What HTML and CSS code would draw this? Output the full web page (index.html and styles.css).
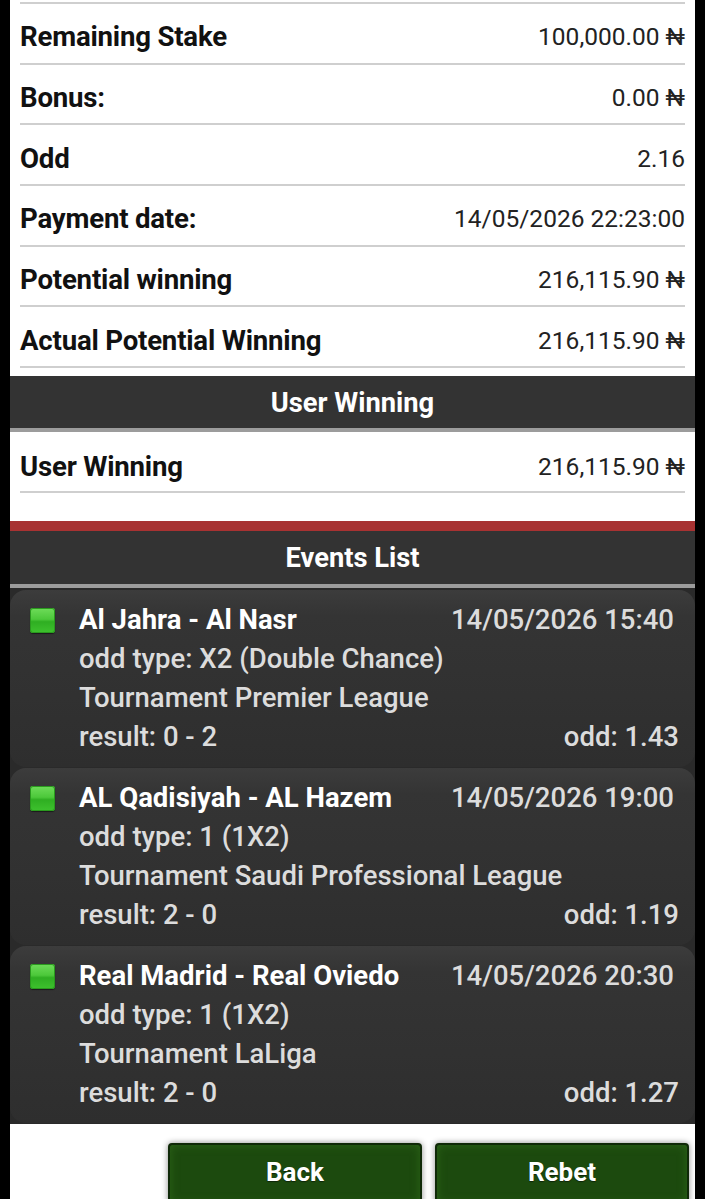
FILE: index.html
```html
<!DOCTYPE html>
<html lang="en">
<head>
<meta charset="utf-8">
<title>Bet details</title>
<link rel="stylesheet" href="styles.css">
</head>
<body>
<div class="page">
  <div class="summary">
    <div class="row"><span class="label">Remaining Stake</span><span class="value">100,000.00 ₦</span></div>
    <div class="row"><span class="label">Bonus:</span><span class="value">0.00 ₦</span></div>
    <div class="row"><span class="label">Odd</span><span class="value">2.16</span></div>
    <div class="row"><span class="label">Payment date:</span><span class="value">14/05/2026 22:23:00</span></div>
    <div class="row"><span class="label">Potential winning</span><span class="value">216,115.90 ₦</span></div>
    <div class="row"><span class="label">Actual Potential Winning</span><span class="value">216,115.90 ₦</span></div>
  </div>
  <div class="section-head">User Winning</div>
  <div class="summary winning">
    <div class="row"><span class="label">User Winning</span><span class="value">216,115.90 ₦</span></div>
  </div>
  <div class="section-head events-head">Events List</div>
  <div class="events">
    <div class="event">
      <span class="status"></span>
      <div class="event-body">
        <div class="line title"><span>Al Jahra - Al Nasr</span><span class="date">14/05/2026 15:40</span></div>
        <div class="line">odd type: X2 (Double Chance)</div>
        <div class="line">Tournament Premier League</div>
        <div class="line split"><span>result: 0 - 2</span><span>odd: 1.43</span></div>
      </div>
    </div>
    <div class="event">
      <span class="status"></span>
      <div class="event-body">
        <div class="line title"><span>AL Qadisiyah - AL Hazem</span><span class="date">14/05/2026 19:00</span></div>
        <div class="line">odd type: 1 (1X2)</div>
        <div class="line">Tournament Saudi Professional League</div>
        <div class="line split"><span>result: 2 - 0</span><span>odd: 1.19</span></div>
      </div>
    </div>
    <div class="event">
      <span class="status"></span>
      <div class="event-body">
        <div class="line title"><span>Real Madrid - Real Oviedo</span><span class="date">14/05/2026 20:30</span></div>
        <div class="line">odd type: 1 (1X2)</div>
        <div class="line">Tournament LaLiga</div>
        <div class="line split"><span>result: 2 - 0</span><span>odd: 1.27</span></div>
      </div>
    </div>
  </div>
  <div class="actions">
    <button class="btn">Back</button>
    <button class="btn">Rebet</button>
  </div>
</div>
</body>
</html>
```

FILE: styles.css
```css
* { box-sizing: border-box; }

html, body {
  margin: 0;
  padding: 0;
  background: #000;
  height: 100%;
  overflow: hidden;
}

body {
  font-family: Roboto, "Noto Sans", "DejaVu Sans", sans-serif;
}

.page {
  margin: 0 10px;
  background: #fff;
  min-height: 100%;
}

.summary {
  padding: 2px 10px 8px;
}

.summary .row {
  display: flex;
  justify-content: space-between;
  align-items: center;
  height: 60.7px;
  padding-top: 7px;
  border-bottom: 2px solid #cfcfcf;
}

.summary .row:first-child {
  border-top: 2px solid #cfcfcf;
  height: 62.7px;
}

.label {
  font-size: 27.6px;
  font-weight: 700;
  color: #111;
  letter-spacing: -0.2px;
}

.value {
  font-size: 24.5px;
  font-weight: 400;
  color: #222;
}

.summary.winning {
  padding: 0 10px 28px;
}

.summary.winning .row:first-child {
  border-top: none;
  height: 61px;
  padding-top: 9px;
}

.section-head {
  background: #333;
  color: #fff;
  font-size: 27.3px;
  font-weight: 700;
  text-align: center;
  height: 56px;
  line-height: 54px;
  border-bottom: 4px solid #9c9c9c;
}

.events-head {
  border-top: 10px solid #a83232;
  height: 67px;
}

.events {
  background: #2a2a2a;
  padding: 2px 0 1px;
  display: flex;
  flex-direction: column;
  gap: 1px;
}

.event {
  display: flex;
  align-items: flex-start;
  border-radius: 16px;
  background: linear-gradient(to bottom, #3c3c3c 0, #343434 26px, #313131 60%, #2e2e2e 100%);
  padding: 9.5px 16px 11.5px 20px;
  height: 177px;
}

.status {
  flex: none;
  width: 25px;
  height: 25px;
  margin-top: 8px;
  margin-right: 24px;
  border-radius: 3px;
  background: linear-gradient(to bottom, #6fdc5a 0, #4cc83a 45%, #2fae22 55%, #3ec22e 100%);
  box-shadow: inset 0 0 0 1px #2a9a1e, 0 1px 1px rgba(0,0,0,0.5);
}

.event-body {
  flex: 1;
  min-width: 0;
}

.line {
  height: 39px;
  line-height: 39px;
  font-size: 27.5px;
  font-weight: 500;
  color: #dcdcdc;
  white-space: nowrap;
}

.line.title {
  display: flex;
  justify-content: space-between;
  color: #fff;
  font-weight: 700;
}

.line.title .date {
  color: #dcdcdc;
  font-weight: 500;
  margin-right: 5px;
}

.line.split {
  display: flex;
  justify-content: space-between;
}

.actions {
  display: flex;
  justify-content: flex-end;
  gap: 13px;
  padding: 19px 6px 0 0;
}

.btn {
  width: 254px;
  height: 62px;
  border: 2px solid #102a08;
  border-radius: 4px;
  background: #1c4a0e;
  box-shadow: inset 0 0 10px #2c6418, 0 0 6px rgba(0,0,0,0.45);
  color: #fff;
  font-family: Roboto, "Noto Sans", sans-serif;
  font-size: 26px;
  font-weight: 700;
  padding: 0 0 4px;
  text-shadow: 0 1px 1px rgba(0,0,0,0.5);
}
```
